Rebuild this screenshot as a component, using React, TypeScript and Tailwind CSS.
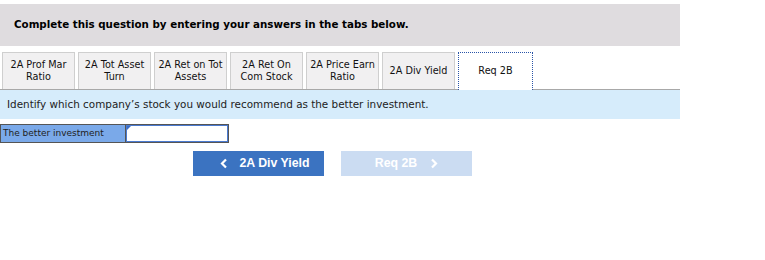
const TABS = [
  ["2A Prof Mar", "Ratio"],
  ["2A Tot Asset", "Turn"],
  ["2A Ret on Tot", "Assets"],
  ["2A Ret On", "Com Stock"],
  ["2A Price Earn", "Ratio"],
  ["2A Div Yield"],
];

function Chevron({ dir }: { dir: "left" | "right" }) {
  return (
    <svg width="8" height="11" viewBox="0 0 8 11" fill="none">
      <path
        d={dir === "left" ? "M6 1.5 L2 5.5 L6 9.5" : "M2 1.5 L6 5.5 L2 9.5"}
        stroke="currentColor"
        strokeWidth="2.2"
      />
    </svg>
  );
}

export default function App() {
  return (
    <div className="w-[765px] h-[260px] bg-white font-['DejaVu_Sans',Verdana,sans-serif] text-black">
      <div className="pt-1 w-[680px]">
        <div className="h-[42px] bg-[#dfdcdf] flex items-center pl-[14px] text-[10.3px] font-bold">
          Complete this question by entering your answers in the tabs below.
        </div>
      </div>

      <div className="w-[680px] mt-[6px] flex items-end pl-[2px] gap-[3px] border-b border-[#a8a8a8]">
        {TABS.map((t, i) => (
          <div
            key={i}
            className="w-[73px] h-[37px] bg-[#f1f0f1] border border-[#cfcfcf] border-b-0 flex flex-col items-center justify-center text-[9.7px] leading-[12px] text-[#111]"
          >
            {t.map((line) => (
              <span key={line}>{line}</span>
            ))}
          </div>
        ))}
        <div className="w-[75px] h-[38px] -mb-px bg-white border border-dotted border-[#2a55a8] border-b-0 flex items-center justify-center text-[9.7px] text-[#111]">
          Req 2B
        </div>
      </div>

      <div className="w-[680px] h-[29px] bg-[#d6ecfb] flex items-center pl-[7px] text-[10.4px] text-[#222]">
        Identify which company’s stock you would recommend as the better investment.
      </div>

      <div className="mt-[5px] flex h-[19px] w-[229px] border border-[#555]">
        <div className="w-[125px] bg-[#7aa9e9] border-r border-[#555] flex items-center pl-[2px] text-[9px] text-[#222]">
          The better investment
        </div>
        <div className="relative flex-1 bg-white border border-[#4a7ad0]">
          <span className="absolute left-0 top-0 w-0 h-0 border-t-[4px] border-r-[4px] border-t-[#3a6ec8] border-r-transparent" />
        </div>
      </div>

      <div className="mt-[8px] flex pl-[193px] gap-[17px] font-['Liberation_Sans',Arial,sans-serif] text-[12.3px] font-bold">
        <button className="w-[131px] h-[25px] bg-[#3b73c1] text-white flex items-center justify-center gap-[12px] pl-[12px]">
          <Chevron dir="left" />
          <span>2A Div Yield</span>
        </button>
        <button className="w-[131px] h-[25px] bg-[#cbdcf2] text-white flex items-center justify-center gap-[13px]">
          <span>Req 2B</span>
          <Chevron dir="right" />
        </button>
      </div>
    </div>
  );
}
